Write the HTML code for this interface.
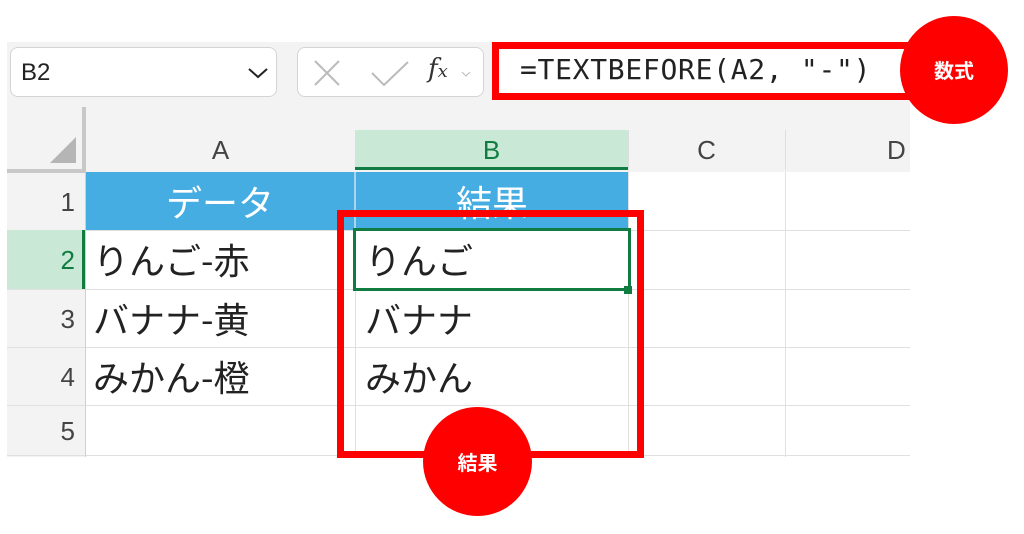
<!DOCTYPE html>
<html><head><meta charset="utf-8"><style>
body{margin:0;width:1024px;height:534px;background:#fff;position:relative;overflow:hidden;font-family:"Liberation Sans","Noto Sans CJK JP",sans-serif}
.a{position:absolute;box-sizing:border-box}
.jp{font-family:"Noto Sans CJK JP",sans-serif}
</style></head><body>
<div class="a" style="left:7px;top:42px;width:903px;height:415px;background:#f3f3f3"></div>
<div class="a" style="left:10px;top:47px;width:267px;height:50px;background:#fff;border:1px solid #d4d4d4;border-radius:8px"></div>
<div class="a" style="left:21px;top:59px;font-size:24px;color:#222">B2</div>
<svg class="a" style="left:247px;top:66px" width="22" height="14"><path d="M2 3 L11 11 L20 3" fill="none" stroke="#222" stroke-width="2"/></svg>
<div class="a" style="left:297px;top:47px;width:187px;height:50px;background:#fff;border:1px solid #d4d4d4;border-radius:8px"></div>
<svg class="a" style="left:312px;top:58px" width="140" height="30"><path d="M3 3 L27 27 M27 3 L3 27" stroke="#bbb" stroke-width="2" fill="none"/><path d="M60 15 L72 27 L96 4" stroke="#bbb" stroke-width="2" fill="none"/><path d="M161 16 L164 19 L167 16" stroke="#bbb" stroke-width="1" fill="none"/></svg>
<div class="a" style="left:428px;top:54px;font-size:26px;font-family:'DejaVu Serif','Liberation Serif',serif;font-style:italic;color:#333">f<span style="font-size:18px">x</span></div>
<svg class="a" style="left:460px;top:70px" width="12" height="8"><path d="M2 2 L6 6 L10 2" stroke="#bbb" stroke-width="1" fill="none"/></svg>
<div class="a" style="left:492px;top:42px;width:420px;height:58px;border:7px solid #f00;background:#fff"></div>
<div class="a" style="left:520px;top:53px;font-size:28px;font-family:'DejaVu Sans Mono','Liberation Mono',monospace;color:#222;letter-spacing:0.7px">=TEXTBEFORE(A2, "-")</div>
<div class="a jp" style="left:900px;top:16px;width:108px;height:108px;border-radius:50%;background:#f00;color:#fff;font-size:20px;font-weight:bold;text-align:center;line-height:108px">数式</div>
<div class="a" style="left:82px;top:107px;width:4px;height:65px;background:#c8c8c8"></div>
<div class="a" style="left:7px;top:169px;width:78px;height:4px;background:#c8c8c8"></div>
<svg class="a" style="left:50px;top:137px" width="28" height="28"><path d="M26 0 L26 26 L0 26Z" fill="#b5b5b5"/></svg>
<div class="a" style="left:355px;top:130px;width:273px;height:40px;background:#c9e9d6;border-bottom:3px solid #107c41"></div>
<div class="a" style="left:86px;top:135px;width:269px;text-align:center;font-size:26px;color:#444">A</div>
<div class="a" style="left:355px;top:135px;width:273px;text-align:center;font-size:26px;color:#107c41">B</div>
<div class="a" style="left:628px;top:135px;width:157px;text-align:center;font-size:26px;color:#444">C</div>
<div class="a" style="left:887px;top:135px;font-size:26px;color:#444">D</div>
<div class="a" style="left:628px;top:130px;width:1px;height:40px;background:#ddd"></div>
<div class="a" style="left:785px;top:130px;width:1px;height:40px;background:#ddd"></div>
<div class="a" style="left:86px;top:172px;width:824px;height:285px;background:#fff"></div>
<div class="a" style="left:86px;top:172px;width:542px;height:58px;background:#45ade2"></div>
<div class="a" style="left:354px;top:172px;width:2px;height:58px;background:#a8d4ee"></div>
<div class="a jp" style="left:86px;top:172px;width:268px;line-height:58px;text-align:center;color:#fff;font-size:36px">データ</div>
<div class="a jp" style="left:356px;top:172px;width:272px;line-height:58px;text-align:center;color:#fff;font-size:36px">結果</div>
<div class="a" style="left:7px;top:230px;width:903px;height:1px;background:#e0e0e0"></div>
<div class="a" style="left:7px;top:289px;width:903px;height:1px;background:#e0e0e0"></div>
<div class="a" style="left:7px;top:347px;width:903px;height:1px;background:#e0e0e0"></div>
<div class="a" style="left:7px;top:405px;width:903px;height:1px;background:#e0e0e0"></div>
<div class="a" style="left:7px;top:455px;width:903px;height:1px;background:#e0e0e0"></div>
<div class="a" style="left:85px;top:172px;width:1px;height:285px;background:#d0d0d0"></div>
<div class="a" style="left:355px;top:230px;width:1px;height:227px;background:#e0e0e0"></div>
<div class="a" style="left:628px;top:172px;width:1px;height:285px;background:#e0e0e0"></div>
<div class="a" style="left:785px;top:172px;width:1px;height:285px;background:#e0e0e0"></div>
<div class="a" style="left:7px;top:230px;width:76px;height:59px;background:#c9e9d6"></div>
<div class="a" style="left:82px;top:230px;width:3px;height:59px;background:#107c41"></div>
<div class="a" style="left:7px;top:172px;width:68px;line-height:60px;text-align:right;font-size:26px;color:#444">1</div>
<div class="a" style="left:7px;top:230px;width:68px;line-height:61px;text-align:right;font-size:26px;color:#107c41">2</div>
<div class="a" style="left:7px;top:289px;width:68px;line-height:60px;text-align:right;font-size:26px;color:#444">3</div>
<div class="a" style="left:7px;top:347px;width:68px;line-height:60px;text-align:right;font-size:26px;color:#444">4</div>
<div class="a" style="left:7px;top:405px;width:68px;line-height:52px;text-align:right;font-size:26px;color:#444">5</div>
<div class="a jp" style="left:93px;top:230px;line-height:59px;font-size:36px;color:#222">りんご-赤</div>
<div class="a jp" style="left:93px;top:289px;line-height:58px;font-size:36px;color:#222">バナナ-黄</div>
<div class="a jp" style="left:93px;top:347px;line-height:58px;font-size:36px;color:#222">みかん-橙</div>
<div class="a jp" style="left:365px;top:230px;line-height:59px;font-size:36px;color:#222">りんご</div>
<div class="a jp" style="left:365px;top:289px;line-height:58px;font-size:36px;color:#222">バナナ</div>
<div class="a jp" style="left:365px;top:347px;line-height:58px;font-size:36px;color:#222">みかん</div>
<div class="a" style="left:353px;top:228px;width:278px;height:63px;border:3px solid #107c41"></div>
<div class="a" style="left:624px;top:286px;width:8px;height:8px;background:#107c41"></div>
<div class="a" style="left:337px;top:210px;width:307px;height:248px;border:7px solid #f00"></div>
<div class="a jp" style="left:423px;top:407px;width:109px;height:109px;border-radius:50%;background:#f00;color:#fff;font-size:20px;font-weight:bold;text-align:center;line-height:109px">結果</div>
</body></html>
